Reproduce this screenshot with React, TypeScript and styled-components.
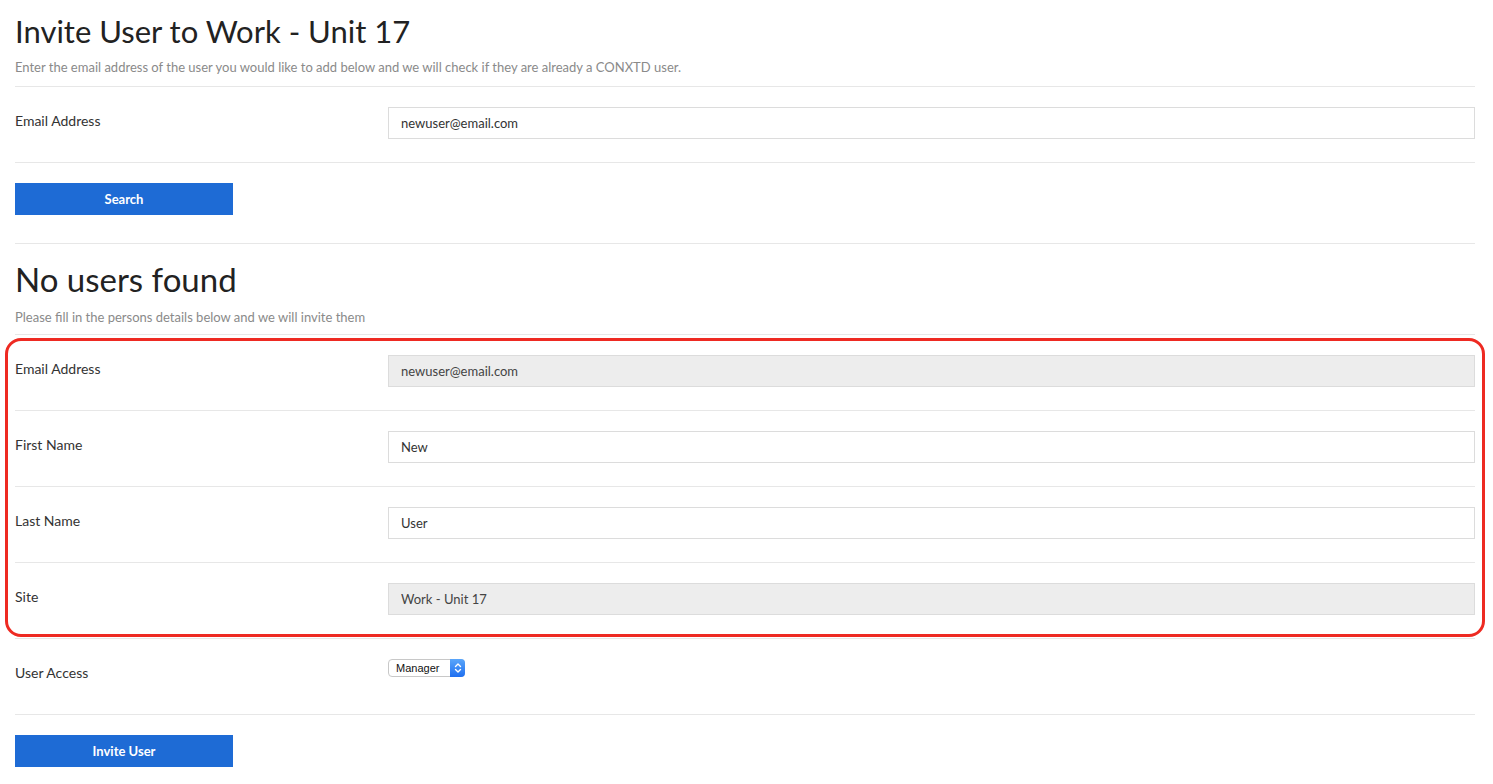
import styled, { createGlobalStyle } from 'styled-components';

const GlobalStyle = createGlobalStyle`
  body {
    margin: 0;
    background: #fff;
    font-family: Lato, "Open Sans", Arial, sans-serif;
    color: #333;
  }
`;

const DETAILS = [
  { label: 'Email Address', value: 'newuser@email.com', disabled: true },
  { label: 'First Name', value: 'New', disabled: false },
  { label: 'Last Name', value: 'User', disabled: false },
  { label: 'Site', value: 'Work - Unit 17', disabled: true },
];

export default function App() {
  return (
    <Page>
      <GlobalStyle />
      <Header>
        <Title>Invite User to Work - Unit 17</Title>
        <Lead>
          Enter the email address of the user you would like to add below and we will check if they are already a CONXTD user.
        </Lead>
      </Header>

      <Row>
        <Label>Email Address</Label>
        <Input defaultValue="newuser@email.com" />
      </Row>

      <ButtonRow>
        <Button>Search</Button>
      </ButtonRow>

      <Header $big>
        <Title $big>No users found</Title>
        <Lead>Please fill in the persons details below and we will invite them</Lead>
      </Header>

      <Highlight>
        {DETAILS.map((item) => (
          <Row key={item.label}>
            <Label>{item.label}</Label>
            <Input defaultValue={item.value} disabled={item.disabled} />
          </Row>
        ))}
        <HighlightRing />
      </Highlight>

      <Row>
        <Label>User Access</Label>
        <SelectWrap>
          <Select defaultValue="Manager">
            <option>Manager</option>
            <option>User</option>
          </Select>
          <SelectArrow>
            <svg width="8" height="12" viewBox="0 0 8 12" fill="none" stroke="#fff" strokeWidth="1.4" strokeLinecap="round" strokeLinejoin="round">
              <path d="M1.5 4.5 L4 2 L6.5 4.5" />
              <path d="M1.5 7.5 L4 10 L6.5 7.5" />
            </svg>
          </SelectArrow>
        </SelectWrap>
      </Row>

      <ButtonRow $last>
        <Button>Invite User</Button>
      </ButtonRow>
    </Page>
  );
}

const Page = styled.div`
  padding: 0 18px 0 15px;
`;

const Header = styled.div<{ $big?: boolean }>`
  padding: ${(p) => (p.$big ? '17px 0 8px' : '16px 0 10px')};
  border-bottom: 1px solid #e7e7e7;
`;

const Title = styled.h1<{ $big?: boolean }>`
  margin: 0;
  font-weight: 400;
  color: #222;
  font-size: ${(p) => (p.$big ? '33px' : '31px')};
  line-height: ${(p) => (p.$big ? '36px' : '31px')};
`;

const Lead = styled.p`
  margin: 11px 0 0;
  font-size: 13px;
  line-height: 18px;
  color: #8a8a8a;
`;

const Row = styled.div`
  display: grid;
  grid-template-columns: 373px 1fr;
  grid-auto-rows: minmax(32px, auto);
  align-items: start;
  padding: 20px 0 23px;
  border-bottom: 1px solid #e7e7e7;
`;

const Label = styled.div`
  margin-top: 5px;
  font-size: 14px;
  line-height: 18px;
  color: #333;
`;

const Input = styled.input`
  box-sizing: border-box;
  width: 100%;
  height: 32px;
  padding: 0 12px;
  border: 1px solid #dcdcdc;
  border-radius: 0;
  background: #fff;
  font-family: Lato, "Open Sans", Arial, sans-serif;
  font-size: 13px;
  color: #333;
  outline: none;

  &:disabled {
    background: #ededed;
    color: #444;
  }
`;

const ButtonRow = styled.div<{ $last?: boolean }>`
  padding: ${(p) => (p.$last ? '20px 0 17px' : '20px 0 28px')};
  border-bottom: ${(p) => (p.$last ? 'none' : '1px solid #e7e7e7')};
`;

const Button = styled.button`
  display: block;
  width: 218px;
  height: 32px;
  border: none;
  background: #1e6bd5;
  color: #fff;
  font-family: Lato, "Open Sans", Arial, sans-serif;
  font-size: 13px;
  font-weight: 700;
  cursor: pointer;
`;

const Highlight = styled.div`
  position: relative;
`;

const HighlightRing = styled.div`
  position: absolute;
  top: 3px;
  bottom: 2px;
  left: -10px;
  right: -10px;
  border: 3px solid #ee2a22;
  border-radius: 16px;
  pointer-events: none;
`;

const SelectWrap = styled.div`
  position: relative;
  width: 77px;
  height: 18px;
`;

const Select = styled.select`
  appearance: none;
  display: block;
  box-sizing: border-box;
  width: 77px;
  height: 18px;
  padding: 0 18px 0 7px;
  border: 1px solid #c8c8c8;
  border-radius: 4px;
  background: #fff;
  font-family: "Liberation Sans", Arial, sans-serif;
  font-size: 11px;
  color: #111;
  outline: none;
`;

const SelectArrow = styled.div`
  position: absolute;
  top: 0;
  right: 0;
  width: 15px;
  height: 18px;
  display: flex;
  align-items: center;
  justify-content: center;
  border-radius: 0 4px 4px 0;
  background: linear-gradient(#5aa6fa, #1f6ff0);
  pointer-events: none;
`;
